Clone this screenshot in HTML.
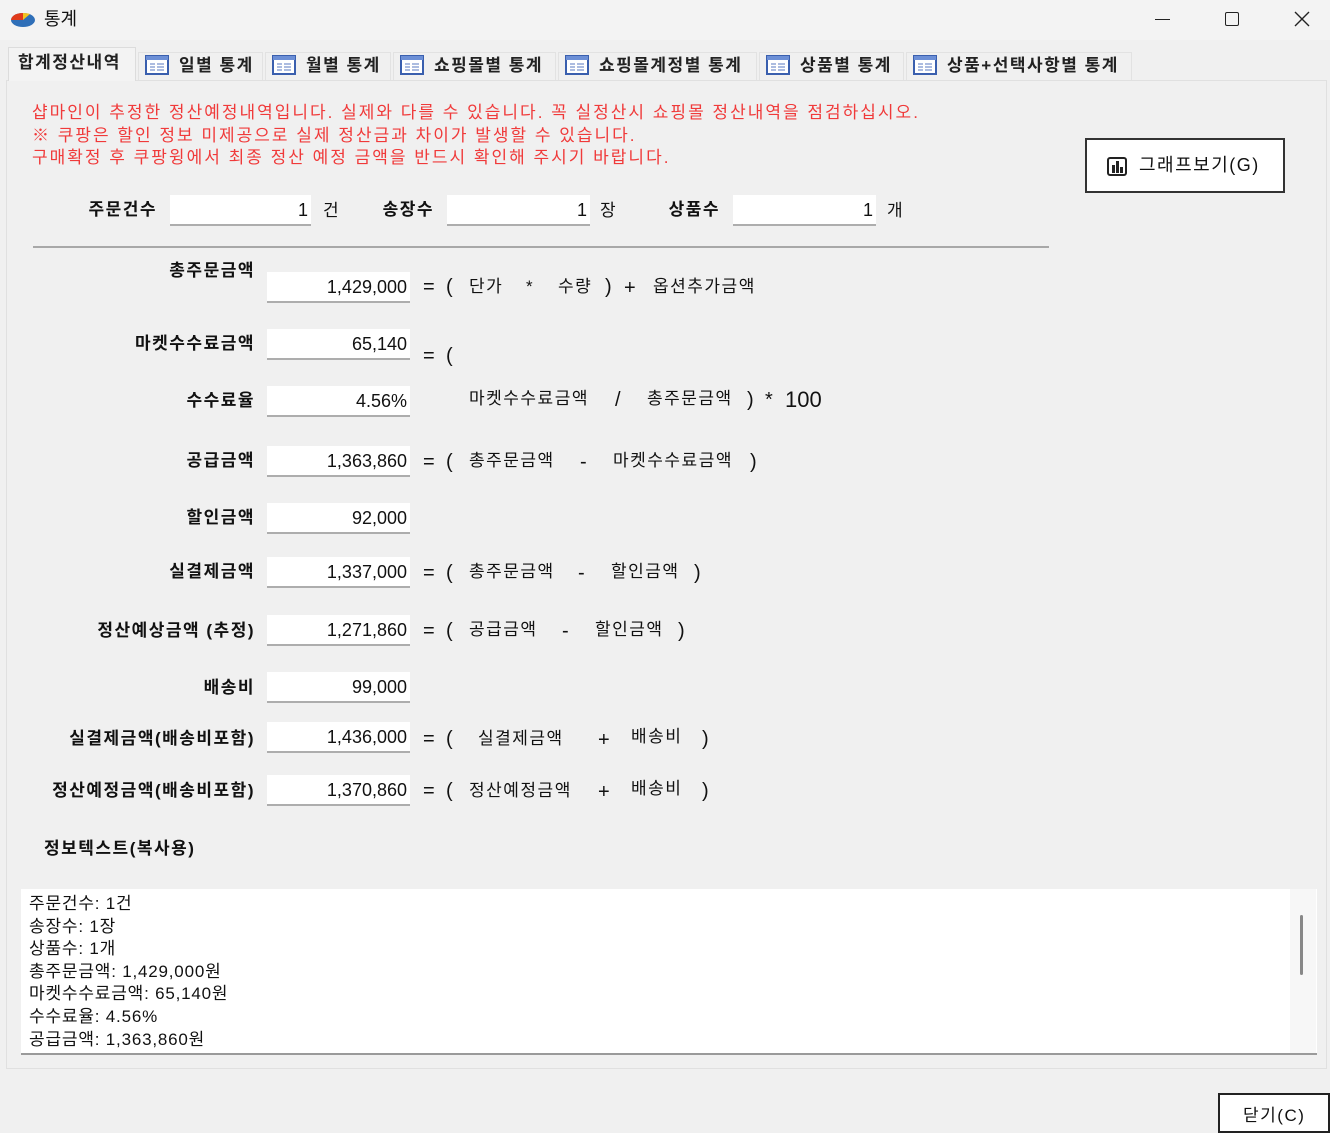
<!DOCTYPE html>
<html><head><meta charset="utf-8">
<style>
*{margin:0;padding:0;box-sizing:border-box}
body{width:1330px;height:1123px;background:#f0f0f0;position:relative;overflow:hidden;font-family:"Liberation Sans","Noto Sans CJK KR",sans-serif;color:#111;font-size:17px}
.a{position:absolute;white-space:nowrap;line-height:20px}
.k{letter-spacing:1.5px}
.lb{font-weight:bold;text-align:right;width:240px;letter-spacing:1.5px}
.in{position:absolute;background:#fff;border-bottom:2px solid #adadad;text-align:right;padding-right:3px;line-height:30px;height:31px;font-size:18px}
.tab{position:absolute;top:52px;height:28px;background:#f0f0f0;border:1px solid #e2e2e2;border-bottom:none;line-height:26px;font-size:17px;font-weight:bold;color:#222;padding-left:6px;letter-spacing:1.5px}
.tab svg{vertical-align:-4px;margin-right:10px}
.red{color:#f03a3a;font-size:17px;letter-spacing:2px}
.op{font-size:20px}
</style></head><body>
<div class="a" style="left:0;top:0;width:1330px;height:40px;background:#f3f3f3"></div>
<svg class="a" style="left:10px;top:10px" width="26" height="18" viewBox="0 0 26 18"><ellipse cx="13" cy="10" rx="12" ry="7" fill="#2f6fb8"/><path d="M13 10 L1 10 A12 7 0 0 1 13 3Z" fill="#e03a1a"/><path d="M13 10 L13 3 A12 7 0 0 1 20 4Z" fill="#f3c420"/></svg>
<div class="a" style="left:44px;top:9px;font-size:18px">통계</div>
<div class="a" style="left:1155px;top:19px;width:15px;height:1px;background:#222"></div>
<div class="a" style="left:1225px;top:12px;width:14px;height:14px;border:1.5px solid #222;border-radius:2px"></div>
<svg class="a" style="left:1294px;top:11px" width="16" height="16"><path d="M1 1L15 15M15 1L1 15" stroke="#222" stroke-width="1.4"/></svg>

<div class="a" style="left:6px;top:80px;width:1321px;height:989px;border:1px solid #e0e0e0;background:#f0f0f0"></div>
<div class="tab" style="left:8px;top:47px;width:128px;height:34px;background:#f3f3f3;border-color:#dcdcdc;line-height:30px;padding-left:9px">합계정산내역</div>
<div class="tab" style="left:138px;width:125px"><svg width="24" height="20"><rect x="1" y="1" width="22" height="18" fill="#fff" stroke="#3a5fae" stroke-width="2"/><rect x="1" y="1" width="22" height="4" fill="#6c8fd6"/><path d="M5 9h5M12 9h7M5 12h5M12 12h7M5 15h5M12 15h7" stroke="#5a7ac0"/></svg>일별 통계</div>
<div class="tab" style="left:265px;width:126px"><svg width="24" height="20"><rect x="1" y="1" width="22" height="18" fill="#fff" stroke="#3a5fae" stroke-width="2"/><rect x="1" y="1" width="22" height="4" fill="#6c8fd6"/><path d="M5 9h5M12 9h7M5 12h5M12 12h7M5 15h5M12 15h7" stroke="#5a7ac0"/></svg>월별 통계</div>
<div class="tab" style="left:393px;width:163px"><svg width="24" height="20"><rect x="1" y="1" width="22" height="18" fill="#fff" stroke="#3a5fae" stroke-width="2"/><rect x="1" y="1" width="22" height="4" fill="#6c8fd6"/><path d="M5 9h5M12 9h7M5 12h5M12 12h7M5 15h5M12 15h7" stroke="#5a7ac0"/></svg>쇼핑몰별 통계</div>
<div class="tab" style="left:558px;width:199px"><svg width="24" height="20"><rect x="1" y="1" width="22" height="18" fill="#fff" stroke="#3a5fae" stroke-width="2"/><rect x="1" y="1" width="22" height="4" fill="#6c8fd6"/><path d="M5 9h5M12 9h7M5 12h5M12 12h7M5 15h5M12 15h7" stroke="#5a7ac0"/></svg>쇼핑몰계정별 통계</div>
<div class="tab" style="left:759px;width:145px"><svg width="24" height="20"><rect x="1" y="1" width="22" height="18" fill="#fff" stroke="#3a5fae" stroke-width="2"/><rect x="1" y="1" width="22" height="4" fill="#6c8fd6"/><path d="M5 9h5M12 9h7M5 12h5M12 12h7M5 15h5M12 15h7" stroke="#5a7ac0"/></svg>상품별 통계</div>
<div class="tab" style="left:906px;width:226px"><svg width="24" height="20"><rect x="1" y="1" width="22" height="18" fill="#fff" stroke="#3a5fae" stroke-width="2"/><rect x="1" y="1" width="22" height="4" fill="#6c8fd6"/><path d="M5 9h5M12 9h7M5 12h5M12 12h7M5 15h5M12 15h7" stroke="#5a7ac0"/></svg>상품+선택사항별 통계</div>

<div class="a red" style="left:32px;top:103px">샵마인이 추정한 정산예정내역입니다. 실제와 다를 수 있습니다. 꼭 실정산시 쇼핑몰 정산내역을 점검하십시오.</div>
<div class="a red" style="left:32px;top:126px">※ 쿠팡은 할인 정보 미제공으로 실제 정산금과 차이가 발생할 수 있습니다.</div>
<div class="a red" style="left:32px;top:148px">구매확정 후 쿠팡윙에서 최종 정산 예정 금액을 반드시 확인해 주시기 바랍니다.</div>

<div class="a" style="left:1085px;top:138px;width:200px;height:55px;border:2px solid #333;background:#fff"></div>
<div class="a" style="left:1107px;top:157px;width:20px;height:19px;border:2px solid #222;border-radius:3px;background:#fff"><div style="position:absolute;left:3px;bottom:1px;width:3px;height:8px;background:#222"></div><div style="position:absolute;left:7px;bottom:1px;width:3px;height:12px;background:#222"></div><div style="position:absolute;left:11px;bottom:1px;width:3px;height:6px;background:#222"></div></div>
<div class="a k" style="left:1139px;top:155px;font-size:18px">그래프보기(G)</div>

<div class="a lb" style="left:-83px;top:200px">주문건수</div>
<div class="in" style="left:170px;top:195px;width:141px">1</div>
<div class="a" style="left:323px;top:201px">건</div>
<div class="a lb" style="left:194px;top:200px">송장수</div>
<div class="in" style="left:447px;top:195px;width:143px">1</div>
<div class="a" style="left:600px;top:201px">장</div>
<div class="a lb" style="left:480px;top:200px">상품수</div>
<div class="in" style="left:733px;top:195px;width:143px">1</div>
<div class="a" style="left:887px;top:201px">개</div>
<div class="a" style="left:33px;top:246px;width:1016px;height:2px;background:#a8a8a8"></div>

<div class="a lb" style="left:15px;top:261px">총주문금액</div>
<div class="in" style="left:267px;top:272px;width:143px">1,429,000</div>
<div class="a op" style="left:423px;top:277px">=</div><div class="a op" style="left:446px;top:277px">(</div>
<div class="a k" style="left:469px;top:277px">단가</div><div class="a" style="left:526px;top:277px">*</div>
<div class="a k" style="left:558px;top:277px">수량</div><div class="a op" style="left:605px;top:277px">)</div><div class="a op" style="left:624px;top:278px">+</div>
<div class="a k" style="left:653px;top:277px">옵션추가금액</div>

<div class="a lb" style="left:15px;top:334px">마켓수수료금액</div>
<div class="in" style="left:267px;top:329px;width:143px">65,140</div>
<div class="a op" style="left:423px;top:346px">=</div><div class="a op" style="left:446px;top:346px">(</div>

<div class="a lb" style="left:15px;top:391px">수수료율</div>
<div class="in" style="left:267px;top:386px;width:143px">4.56%</div>
<div class="a k" style="left:469px;top:389px">마켓수수료금액</div><div class="a op" style="left:615px;top:390px">/</div>
<div class="a k" style="left:647px;top:389px">총주문금액</div><div class="a op" style="left:747px;top:390px">)</div>
<div class="a op" style="left:765px;top:390px">*</div><div class="a" style="left:785px;top:390px;font-size:22px">100</div>

<div class="a lb" style="left:15px;top:451px">공급금액</div>
<div class="in" style="left:267px;top:446px;width:143px">1,363,860</div>
<div class="a op" style="left:423px;top:452px">=</div><div class="a op" style="left:446px;top:452px">(</div>
<div class="a k" style="left:469px;top:451px">총주문금액</div><div class="a op" style="left:580px;top:452px">-</div>
<div class="a k" style="left:613px;top:451px">마켓수수료금액</div><div class="a op" style="left:750px;top:452px">)</div>

<div class="a lb" style="left:15px;top:508px">할인금액</div>
<div class="in" style="left:267px;top:503px;width:143px">92,000</div>

<div class="a lb" style="left:15px;top:562px">실결제금액</div>
<div class="in" style="left:267px;top:557px;width:143px">1,337,000</div>
<div class="a op" style="left:423px;top:563px">=</div><div class="a op" style="left:446px;top:563px">(</div>
<div class="a k" style="left:469px;top:562px">총주문금액</div><div class="a op" style="left:578px;top:563px">-</div>
<div class="a k" style="left:611px;top:562px">할인금액</div><div class="a op" style="left:694px;top:563px">)</div>

<div class="a lb" style="left:15px;top:621px">정산예상금액 (추정)</div>
<div class="in" style="left:267px;top:615px;width:143px">1,271,860</div>
<div class="a op" style="left:423px;top:621px">=</div><div class="a op" style="left:446px;top:621px">(</div>
<div class="a k" style="left:469px;top:620px">공급금액</div><div class="a op" style="left:562px;top:621px">-</div>
<div class="a k" style="left:595px;top:620px">할인금액</div><div class="a op" style="left:678px;top:621px">)</div>

<div class="a lb" style="left:15px;top:678px">배송비</div>
<div class="in" style="left:267px;top:672px;width:143px">99,000</div>

<div class="a lb" style="left:15px;top:729px">실결제금액(배송비포함)</div>
<div class="in" style="left:267px;top:722px;width:143px">1,436,000</div>
<div class="a op" style="left:423px;top:729px">=</div><div class="a op" style="left:446px;top:729px">(</div>
<div class="a k" style="left:478px;top:729px">실결제금액</div><div class="a op" style="left:598px;top:730px">+</div>
<div class="a k" style="left:631px;top:727px">배송비</div><div class="a op" style="left:702px;top:729px">)</div>

<div class="a lb" style="left:15px;top:781px">정산예정금액(배송비포함)</div>
<div class="in" style="left:267px;top:775px;width:143px">1,370,860</div>
<div class="a op" style="left:423px;top:781px">=</div><div class="a op" style="left:446px;top:781px">(</div>
<div class="a k" style="left:469px;top:781px">정산예정금액</div><div class="a op" style="left:598px;top:782px">+</div>
<div class="a k" style="left:631px;top:779px">배송비</div><div class="a op" style="left:702px;top:781px">)</div>

<div class="a k" style="left:44px;top:839px;font-weight:bold">정보텍스트(복사용)</div>

<div class="a" style="left:21px;top:889px;width:1296px;height:166px;background:#fff;border-bottom:2px solid #9a9a9a"></div>
<div class="a" style="left:1290px;top:889px;width:26px;height:164px;background:#f7f7f7"></div>
<div class="a" style="left:1300px;top:915px;width:3px;height:60px;background:#888;border-radius:2px"></div>
<div class="a" style="left:29px;top:893px;line-height:22.6px;font-size:17px;white-space:pre;letter-spacing:0.8px">주문건수: 1건
송장수: 1장
상품수: 1개
총주문금액: 1,429,000원
마켓수수료금액: 65,140원
수수료율: 4.56%
공급금액: 1,363,860원</div>

<div class="a" style="left:1218px;top:1093px;width:112px;height:40px;border:2px solid #222;background:#fff"></div>
<div class="a k" style="left:1243px;top:1106px;font-size:17px">닫기(C)</div>
</body></html>
